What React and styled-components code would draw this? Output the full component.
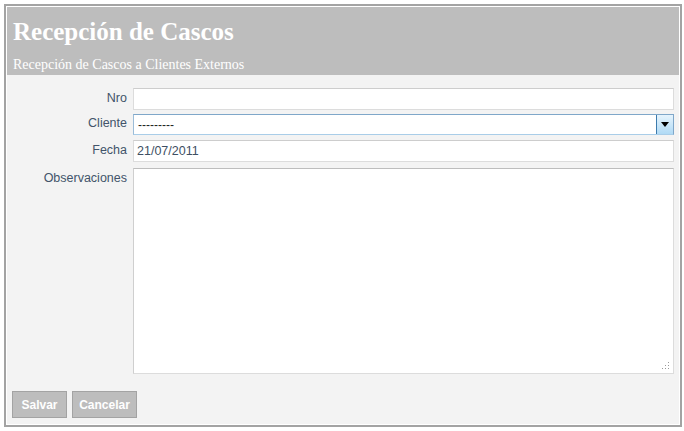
import styled, { createGlobalStyle } from "styled-components";

const GlobalStyle = createGlobalStyle`
    html, body {
        margin: 0;
        padding: 0;
        background: #ffffff;
    }
    body {
        padding: 4px;
        font-family: "Liberation Sans", Arial, sans-serif;
    }
`;

const Panel = styled.div`
    width: 672px;
    height: 417px;
    border: 2px solid #a3a3a3;
    padding: 1px;
    background: #ffffff;
    display: flex;
    flex-direction: column;
    box-sizing: content-box;
`;

const Header = styled.div`
    background: #bdbdbd;
    height: 68px;
    padding: 0 6px;
    color: #ffffff;
    font-family: "Liberation Serif", "Times New Roman", serif;
    .title {
        margin: 0;
        padding-top: 10px;
        font-size: 25px;
        font-weight: bold;
        line-height: 29px;
    }
    .subtitle {
        margin-top: 10px;
        font-size: 14px;
        line-height: 17px;
    }
`;

const Body = styled.div`
    flex: 1;
    background: #f3f3f3;
    padding: 13px 5px 6px 5px;
    display: flex;
    flex-direction: column;
`;

const Row = styled.div`
    display: grid;
    grid-template-columns: 115px 1fr;
    column-gap: 6px;
    align-items: start;
    margin-bottom: ${(p) => p.$gap || 4}px;
`;

const Label = styled.label`
    text-align: right;
    font-family: "Liberation Sans", Arial, sans-serif;
    font-size: 12.5px;
    line-height: 15px;
    color: #42546a;
    padding-top: ${(p) => p.$top || 3}px;
`;

const TextInput = styled.input`
    box-sizing: border-box;
    width: 100%;
    height: 22px;
    border: 1px solid #dcdcdc;
    border-top-color: #cdcdcd;
    background: #ffffff;
    padding: 0 3px;
    font-family: "Liberation Sans", Arial, sans-serif;
    font-size: 12.5px;
    color: #3e4f63;
    outline: none;
`;

const SelectBox = styled.div`
    box-sizing: border-box;
    height: 21px;
    border: 1px solid #7fa7c9;
    border-bottom-color: #a9cde8;
    border-left-color: #9bbcd8;
    background: #ffffff;
    display: flex;
    align-items: center;
    font-family: "Liberation Sans", Arial, sans-serif;
    font-size: 12px;
    color: #222222;
    .value {
        flex: 1;
        padding-left: 4px;
    }
    .arrow {
        width: 17px;
        height: 19px;
        box-sizing: border-box;
        border-left: 1px solid #3d7bad;
        background: linear-gradient(#e6f4fd, #b0daf5);
        display: flex;
        align-items: center;
        justify-content: center;
    }
`;

const AreaWrap = styled.div`
    position: relative;
    height: 206px;
`;

const TextArea = styled.textarea`
    box-sizing: border-box;
    width: 100%;
    height: 100%;
    border: 1px solid #dcdcdc;
    border-top-color: #bdbdbd;
    border-left-color: #cfcfcf;
    background: #ffffff;
    resize: none;
    outline: none;
    display: block;
    margin: 0;
`;

const Grip = styled.svg`
    position: absolute;
    right: 5px;
    bottom: 5px;
    pointer-events: none;
`;

const Actions = styled.div`
    margin-top: auto;
    display: flex;
    gap: 5px;
`;

const Button = styled.button`
    height: 27px;
    width: ${(p) => p.$w}px;
    padding: 0;
    background: #bdbdbd;
    border: 1px solid #a3a3a3;
    color: #ffffff;
    font-family: "Liberation Sans", Arial, sans-serif;
    font-weight: bold;
    font-size: 12px;
`;

export default function App() {
    return (
        <>
            <GlobalStyle />
            <Panel>
                <Header>
                    <h1 className="title">Recepción de Cascos</h1>
                    <div className="subtitle">Recepción de Cascos a Clientes Externos</div>
                </Header>
                <Body>
                    <Row>
                        <Label>Nro</Label>
                        <TextInput defaultValue="" />
                    </Row>
                    <Row $gap={5}>
                        <Label $top={2}>Cliente</Label>
                        <SelectBox>
                            <span className="value">---------</span>
                            <span className="arrow">
                                <svg width="8" height="5" viewBox="0 0 8 5">
                                    <path d="M0 0h8L4 5z" fill="#000000" />
                                </svg>
                            </span>
                        </SelectBox>
                    </Row>
                    <Row $gap={6}>
                        <Label>Fecha</Label>
                        <TextInput defaultValue="21/07/2011" />
                    </Row>
                    <Row>
                        <Label>Observaciones</Label>
                        <AreaWrap>
                            <TextArea />
                            <Grip width="7" height="7" viewBox="0 0 7 7">
                                <g fill="#9a9a9a">
                                    <rect x="6" y="0" width="1" height="1" />
                                    <rect x="3" y="3" width="1" height="1" />
                                    <rect x="6" y="3" width="1" height="1" />
                                    <rect x="0" y="6" width="1" height="1" />
                                    <rect x="3" y="6" width="1" height="1" />
                                    <rect x="6" y="6" width="1" height="1" />
                                </g>
                            </Grip>
                        </AreaWrap>
                    </Row>
                    <Actions>
                        <Button $w={55}>Salvar</Button>
                        <Button $w={65}>Cancelar</Button>
                    </Actions>
                </Body>
            </Panel>
        </>
    );
}
